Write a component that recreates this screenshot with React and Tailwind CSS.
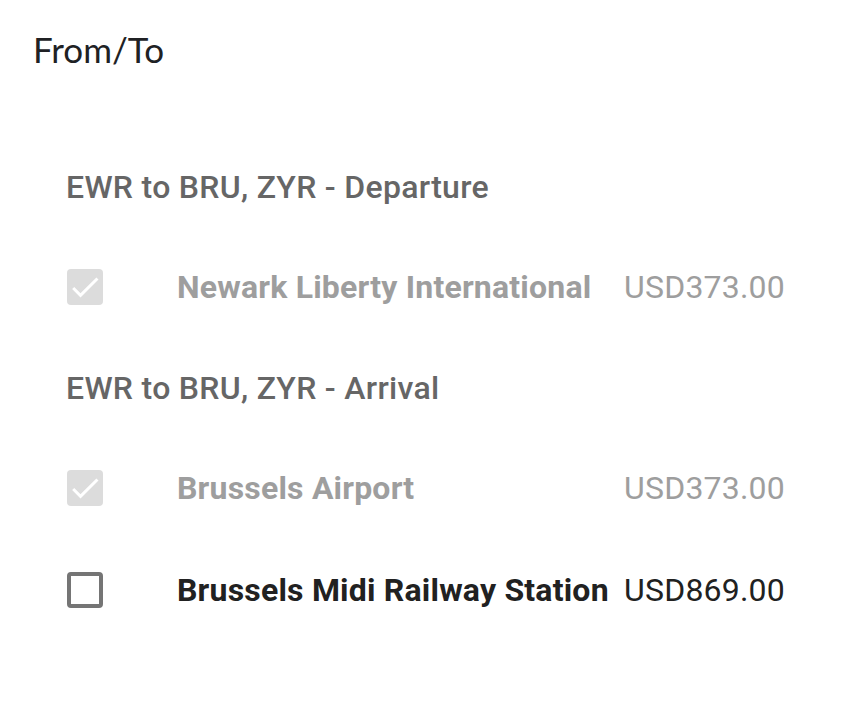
const sections = [
  {
    title: 'EWR to BRU, ZYR - Departure',
    items: [{ name: 'Newark Liberty International', price: 'USD373.00', checked: true, disabled: true }],
  },
  {
    title: 'EWR to BRU, ZYR - Arrival',
    items: [
      { name: 'Brussels Airport', price: 'USD373.00', checked: true, disabled: true },
      { name: 'Brussels Midi Railway Station', price: 'USD869.00', checked: false, disabled: false },
    ],
  },
]

function Checkbox({ checked }) {
  if (checked) {
    return (
      <span className="flex h-9 w-9 items-center justify-center rounded-[4px] bg-[#dcdcdc]">
        <svg viewBox="0 0 24 24" className="h-9 w-9" fill="#fff">
          <path d="M9 16.17L4.83 12l-1.42 1.41L9 19 21 7l-1.41-1.41z" />
        </svg>
      </span>
    )
  }
  return <span className="block h-9 w-9 rounded-[4px] border-4 border-[#757575] bg-white" />
}

function Row({ name, price, checked, disabled }) {
  const color = disabled ? 'text-[#9e9e9e]' : 'text-[#212121]'
  return (
    <div className="flex h-[102px] items-center pr-[67px]">
      <div className="w-[111px] shrink-0 pl-[1px]">
        <Checkbox checked={checked} />
      </div>
      <span className={`flex-1 text-[32px] font-bold tracking-[0.2px] ${color}`}>{name}</span>
      <span className={`text-[32px] tracking-[0.2px] ${color}`}>{price}</span>
    </div>
  )
}

export default function App() {
  return (
    <div className="h-[718px] w-[852px] bg-white font-['Roboto',sans-serif]">
      <h1 className="pl-[33px] pt-[27px] font-['Lato',sans-serif] text-[35px] leading-[44px] text-[#202124]">From/To</h1>
      <div className="pl-[66px] pt-[66px]">
        {sections.map((s) => (
          <div key={s.title}>
            <h2 className="flex h-[99px] items-center text-[32px] font-medium tracking-[0.3px] text-[#666]">{s.title}</h2>
            {s.items.map((it) => (
              <Row key={it.name} {...it} />
            ))}
          </div>
        ))}
      </div>
    </div>
  )
}
